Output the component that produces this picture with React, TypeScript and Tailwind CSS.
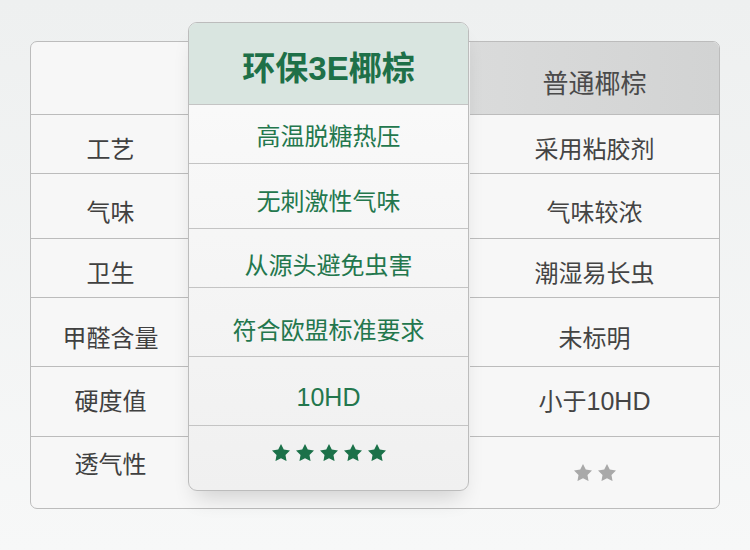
import React from "react";

const FONT = { fontFamily: '"Liberation Sans", "Noto Sans CJK SC", sans-serif' };

function Star({ color }: { color: string }) {
  return (
    <svg viewBox="2 2 20 19.5" width="18" height="17.5" className="block">
      <path
        d="M12 2l3.09 6.26L22 9.27l-5 4.87 1.18 6.88L12 17.77l-6.18 3.25L7 14.14 2 9.27l6.91-1.01L12 2z"
        fill={color}
      />
    </svg>
  );
}

function Stars({ n, color }: { n: number; color: string }) {
  return (
    <div className="flex gap-[6px]">
      {Array.from({ length: n }).map((_, i) => (
        <Star key={i} color={color} />
      ))}
    </div>
  );
}

export default function App() {
  return (
    <div
      className="w-[750px] h-[550px] bg-gradient-to-b from-[#eef0f0] to-[#f7f8f8] pt-[41px] pl-[30px]"
      style={FONT}
    >
      <div className="relative w-[690px] h-[468px] rounded-[7px] border border-[#bcbcbc] bg-[#f7f7f7] flex">
        {/* left column */}
        <div className="w-[159px] flex flex-col text-[24px] leading-none text-[#404040]">
          <div className="h-[73px] border-b border-[#bcbcbc]" />
          <div className="h-[59px] border-b border-[#bcbcbc] flex items-center justify-center pt-[11px]">工艺</div>
          <div className="h-[65px] border-b border-[#bcbcbc] flex items-center justify-center pt-[13px]">气味</div>
          <div className="h-[59px] border-b border-[#bcbcbc] flex items-center justify-center pt-[11px]">卫生</div>
          <div className="h-[69px] border-b border-[#bcbcbc] flex items-center justify-center pt-[13px]">甲醛含量</div>
          <div className="h-[70px] border-b border-[#bcbcbc] flex items-center justify-center">硬度值</div>
          <div className="h-[71px] flex items-center justify-center pb-[16px]">透气性</div>
        </div>
        {/* middle spacer */}
        <div className="w-[280px]" />
        {/* right column */}
        <div className="w-[249px] flex flex-col text-[24px] leading-none text-[#444]">
          <div className="h-[73px] border-b border-[#bcbcbc] rounded-tr-[6px] bg-gradient-to-r from-[#dadbdb] to-[#d2d3d3] flex items-center justify-center pt-[11px] text-[26px] text-[#4a4a4a]">
            普通椰棕
          </div>
          <div className="h-[59px] border-b border-[#bcbcbc] flex items-center justify-center pt-[11px]">采用粘胶剂</div>
          <div className="h-[65px] border-b border-[#bcbcbc] flex items-center justify-center pt-[13px]">气味较浓</div>
          <div className="h-[59px] border-b border-[#bcbcbc] flex items-center justify-center pt-[11px]">潮湿易长虫</div>
          <div className="h-[69px] border-b border-[#bcbcbc] flex items-center justify-center pt-[13px]">未标明</div>
          <div className="h-[70px] border-b border-[#bcbcbc] flex items-center justify-center">
            小于<span className="text-[25px]">10HD</span>
          </div>
          <div className="h-[71px] flex items-center justify-center">
            <Stars n={2} color="#a9a9a9" />
          </div>
        </div>

        {/* highlighted card */}
        <div className="absolute left-[157px] top-[-20px] w-[281px] h-[469px] rounded-[9px] border border-[#bcbcbc] bg-gradient-to-b from-[#fbfbfb] to-[#f0f0f0] shadow-[0_14px_22px_-8px_rgba(0,0,0,0.16)] flex flex-col text-[24px] leading-none text-[#23774d]">
          <div className="h-[82px] border-b border-[#c4c4c4] rounded-t-[8px] bg-[#d9e5e0] flex items-center justify-center pt-[10px] text-[33px] font-bold text-[#1e7048]">
            环保3E椰棕
          </div>
          <div className="h-[59px] border-b border-[#c4c4c4] flex items-center justify-center pt-[5px]">高温脱糖热压</div>
          <div className="h-[65px] border-b border-[#c4c4c4] flex items-center justify-center pt-[11px]">无刺激性气味</div>
          <div className="h-[59px] border-b border-[#c4c4c4] flex items-center justify-center pt-[15px]">从源头避免虫害</div>
          <div className="h-[69px] border-b border-[#c4c4c4] flex items-center justify-center pt-[18px]">符合欧盟标准要求</div>
          <div className="h-[69px] border-b border-[#c4c4c4] flex items-center justify-center pt-[13px] text-[25px]">10HD</div>
          <div className="flex-1 flex items-center justify-center pb-[11px]">
            <Stars n={5} color="#1b7149" />
          </div>
        </div>
      </div>
    </div>
  );
}
